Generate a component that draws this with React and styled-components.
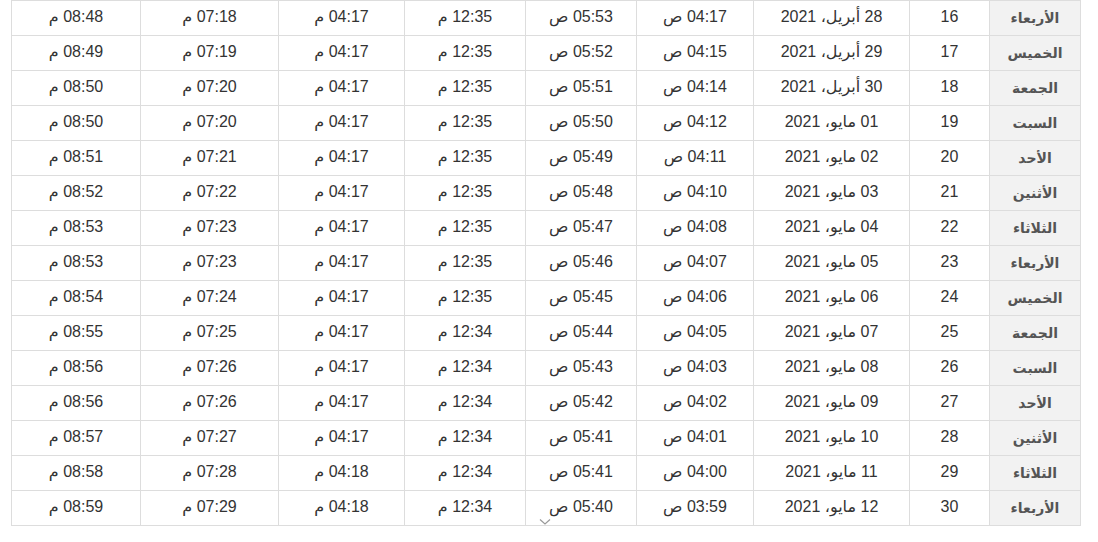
import React from "react";
import styled, { createGlobalStyle } from "styled-components";

const Global = createGlobalStyle`
  html, body { margin: 0; padding: 0; background: #fff; }
  body { font-family: "Liberation Sans", Arial, "DejaVu Sans", sans-serif; }
`;

const Page = styled.div`
  padding: 0 17px 0 11px;
  position: relative;
  width: 1070px;
  direction: rtl;
`;

const Table = styled.table`
  width: 1070px;
  border-collapse: collapse;
  table-layout: fixed;
  direction: rtl;
  color: #333;
  font-size: 16px;
`;

const Cell = styled.td`
  border: 1px solid #ddd;
  height: 31px;
  padding: 0 0 3px 0;
  text-align: center;
  vertical-align: middle;
  line-height: 18px;
  white-space: nowrap;
`;

const DayCell = styled(Cell)`
  background: #f2f2f2;
  color: #555;
  font-weight: bold;
  font-size: 14px;
  height: 33px;
  padding-bottom: 1px;
`;

const Chevron = styled.svg`
  position: absolute;
  left: 539px;
  top: 518px;
  width: 12px;
  height: 8px;
`;

const widths = [91, 80, 156, 117, 111, 121, 126, 138, 129];

const rows = [
  ["الأربعاء", 16, "28 أبريل، 2021", "04:17", "05:53", "12:35", "04:17", "07:18", "08:48"],
  ["الخميس", 17, "29 أبريل، 2021", "04:15", "05:52", "12:35", "04:17", "07:19", "08:49"],
  ["الجمعة", 18, "30 أبريل، 2021", "04:14", "05:51", "12:35", "04:17", "07:20", "08:50"],
  ["السبت", 19, "01 مايو، 2021", "04:12", "05:50", "12:35", "04:17", "07:20", "08:50"],
  ["الأحد", 20, "02 مايو، 2021", "04:11", "05:49", "12:35", "04:17", "07:21", "08:51"],
  ["الأثنين", 21, "03 مايو، 2021", "04:10", "05:48", "12:35", "04:17", "07:22", "08:52"],
  ["الثلاثاء", 22, "04 مايو، 2021", "04:08", "05:47", "12:35", "04:17", "07:23", "08:53"],
  ["الأربعاء", 23, "05 مايو، 2021", "04:07", "05:46", "12:35", "04:17", "07:23", "08:53"],
  ["الخميس", 24, "06 مايو، 2021", "04:06", "05:45", "12:35", "04:17", "07:24", "08:54"],
  ["الجمعة", 25, "07 مايو، 2021", "04:05", "05:44", "12:34", "04:17", "07:25", "08:55"],
  ["السبت", 26, "08 مايو، 2021", "04:03", "05:43", "12:34", "04:17", "07:26", "08:56"],
  ["الأحد", 27, "09 مايو، 2021", "04:02", "05:42", "12:34", "04:17", "07:26", "08:56"],
  ["الأثنين", 28, "10 مايو، 2021", "04:01", "05:41", "12:34", "04:17", "07:27", "08:57"],
  ["الثلاثاء", 29, "11 مايو، 2021", "04:00", "05:41", "12:34", "04:18", "07:28", "08:58"],
  ["الأربعاء", 30, "12 مايو، 2021", "03:59", "05:40", "12:34", "04:18", "07:29", "08:59"],
];

const suffix = ["ص", "ص", "م", "م", "م", "م"];

export default function App() {
  return (
    <>
      <Global />
      <Page>
        <Table>
          <colgroup>
            {widths.map((w, i) => (
              <col key={i} style={{ width: w }} />
            ))}
          </colgroup>
          <tbody>
            {rows.map((r, i) => (
              <tr key={i}>
                <DayCell>{r[0]}</DayCell>
                <Cell>{r[1]}</Cell>
                <Cell>{r[2]}</Cell>
                {r.slice(3).map((t, j) => (
                  <Cell key={j}>{`${t} ${suffix[j]}`}</Cell>
                ))}
              </tr>
            ))}
          </tbody>
        </Table>
        <Chevron viewBox="0 0 12 8">
          <path d="M1 1.5 L6 6 L11 1.5" fill="none" stroke="#999" strokeWidth="1.2" />
        </Chevron>
      </Page>
    </>
  );
}
